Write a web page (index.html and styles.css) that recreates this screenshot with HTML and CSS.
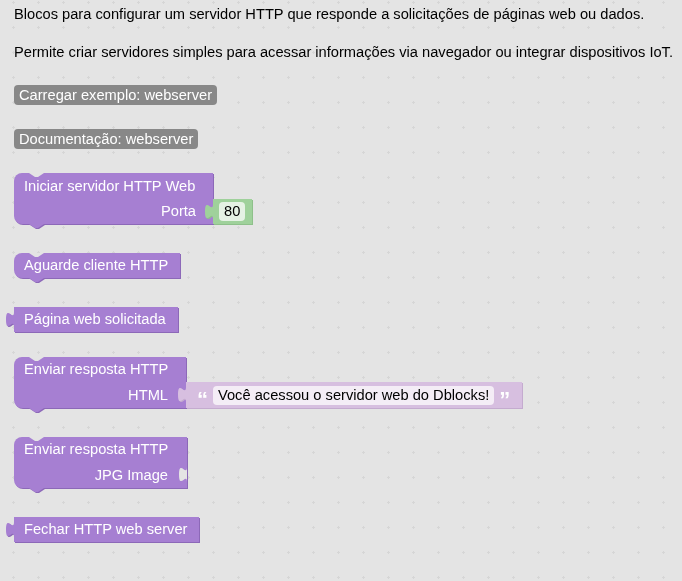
FILE: index.html
```html
<!DOCTYPE html>
<html lang="pt-BR">
<head>
<meta charset="utf-8">
<title>Webserver</title>
<link rel="stylesheet" href="styles.css">
</head>
<body>
<svg class="grid" aria-hidden="true">
  <defs>
    <pattern id="cross" width="25" height="25" patternUnits="userSpaceOnUse">
      <rect x="12" y="2" width="3" height="1" class="gc"/>
      <rect x="13" y="1" width="1" height="3" class="gc"/>
    </pattern>
  </defs>
  <rect width="100%" height="100%" fill="url(#cross)"/>
</svg>
<main class="flyout">
  <p class="desc">Blocos para configurar um servidor HTTP que responde a solicitações de páginas web ou dados.</p>
  <p class="desc d2">Permite criar servidores simples para acessar informações via navegador ou integrar dispositivos IoT.</p>
  <div class="btn">Carregar exemplo: webserver</div>
  <div class="btn">Documentação: webserver</div>

  <div class="group sp24">
    <div class="blk stmt w1">
      <div class="row h26">Iniciar servidor HTTP Web</div>
      <div class="row right p17">Porta</div>
    </div>
    <div class="val num">
      <svg class="tab" viewBox="0 0 9 20"><path d="M9 0V5H8C8 15 0 -3 0 12.5S8 10 8 20H9Z"/></svg>
      <span class="field">80</span>
    </div>
  </div>

  <div class="group sp29">
    <div class="blk stmt">
      <div class="row">Aguarde cliente HTTP</div>
    </div>
  </div>

  <div class="group sp29">
    <div class="blk out">
      <svg class="tab" viewBox="0 0 9 20"><path d="M9 0V5H8C8 15 0 -3 0 12.5S8 10 8 20H9Z"/></svg>
      <div class="row">Página web solicitada</div>
    </div>
  </div>

  <div class="group sp25">
    <div class="blk stmt w4">
      <div class="row">Enviar resposta HTTP</div>
      <div class="row right h26">HTML</div>
    </div>
    <div class="val str">
      <svg class="tab" viewBox="0 0 9 20"><path d="M9 0V5H8C8 15 0 -3 0 12.5S8 10 8 20H9Z"/></svg>
      <span class="q">“</span>
      <span class="field">Você acessou o servidor web do Dblocks!</span>
      <span class="q">”</span>
    </div>
  </div>

  <div class="group sp29">
    <div class="blk stmt w5">
      <div class="row">Enviar resposta HTTP</div>
      <div class="row right h26 p19">JPG Image</div>
      <svg class="socket" viewBox="0 0 8 20"><path d="M8 0V5C8 15 0 -3 0 12.5S8 10 8 20Z"/></svg>
    </div>
  </div>

  <div class="group sp29">
    <div class="blk out">
      <svg class="tab" viewBox="0 0 9 20"><path d="M9 0V5H8C8 15 0 -3 0 12.5S8 10 8 20H9Z"/></svg>
      <div class="row">Fechar HTTP web server</div>
    </div>
  </div>
</main>
</body>
</html>
```
FILE: styles.css
```css
* { box-sizing: border-box; }

html, body {
  margin: 0;
  height: 100%;
}

body {
  background: #e4e4e4;
  font-family: "Liberation Sans", Arial, sans-serif;
  font-size: 14.667px;
  color: #000;
  overflow: hidden;
}

.grid {
  position: fixed;
  top: 0;
  left: 0;
  width: 100%;
  height: 100%;
  z-index: 0;
}

.gc { fill: #d6d6d6; }

.flyout {
  position: relative;
  z-index: 1;
  display: flex;
  flex-direction: column;
  align-items: flex-start;
  padding: 5px 0 0 14px;
}

.desc {
  margin: 0;
  line-height: 18px;
  white-space: nowrap;
}

.d2 { margin-top: 20px; }

.btn {
  margin-top: 24px;
  height: 20px;
  line-height: 20px;
  padding: 0 5px;
  background: #888888;
  color: #fff;
  border-radius: 4px;
  white-space: nowrap;
}

.group {
  display: flex;
  align-items: flex-end;
}

.sp24 { margin-top: 24px; }
.sp25 { margin-top: 25px; }
.sp29 { margin-top: 29px; }

.blk {
  position: relative;
  background: #a67fd2;
  color: #fff;
  filter: drop-shadow(1px 1px 0 #8c68b8);
}

.stmt { border-radius: 8px 0 0 8px; }

.stmt::before {
  content: "";
  position: absolute;
  top: 0;
  left: 15px;
  width: 15px;
  height: 4px;
  background: #e4e4e4;
  clip-path: polygon(0 0, 100% 0, 60% 100%, 40% 100%);
}

.stmt::after {
  content: "";
  position: absolute;
  bottom: -4px;
  left: 15px;
  width: 15px;
  height: 4px;
  background: #a67fd2;
  clip-path: polygon(0 0, 100% 0, 60% 100%, 40% 100%);
}

.w1 { width: 199px; }
.w4 { width: 172px; }
.w5 { width: 173px; }

.row {
  height: 25px;
  line-height: 25px;
  padding: 0 12px 0 10px;
  white-space: nowrap;
}

.row.h26 { height: 26px; line-height: 26px; }
.row.right { text-align: right; padding-right: 18px; }
.row.p17 { padding-right: 17px; }
.row.p19 { padding-right: 19px; }

.tab {
  position: absolute;
  left: -8px;
  top: 0;
  width: 9px;
  height: 20px;
}

.out .tab { fill: #a67fd2; }

.socket {
  position: absolute;
  right: 0;
  top: 25px;
  width: 8px;
  height: 20px;
  fill: #e4e4e4;
}

.val {
  position: relative;
  display: flex;
  align-items: center;
  white-space: nowrap;
}

.num {
  height: 25px;
  padding: 0 7px 0 6px;
  background: #9fd19b;
  filter: drop-shadow(1px 1px 0 #8ec08a);
}

.num .tab { fill: #9fd19b; }

.field {
  display: block;
  height: 19px;
  line-height: 19px;
  padding: 0 5px;
  border-radius: 4px;
  color: #000;
}

.num .field { background: #e5f2e4; }

.str {
  height: 26px;
  padding: 0 12px 0 11px;
  gap: 5px;
  background: #d7bfe0;
  filter: drop-shadow(1px 1px 0 #c4abcf);
}

.str .tab { fill: #d7bfe0; }

.str .field { background: #f4edf6; }

.q {
  color: #ffffff;
  font-weight: bold;
  font-size: 22px;
  line-height: 26px;
  height: 26px;
  align-self: flex-start;
  padding-top: 5px;
}
```
